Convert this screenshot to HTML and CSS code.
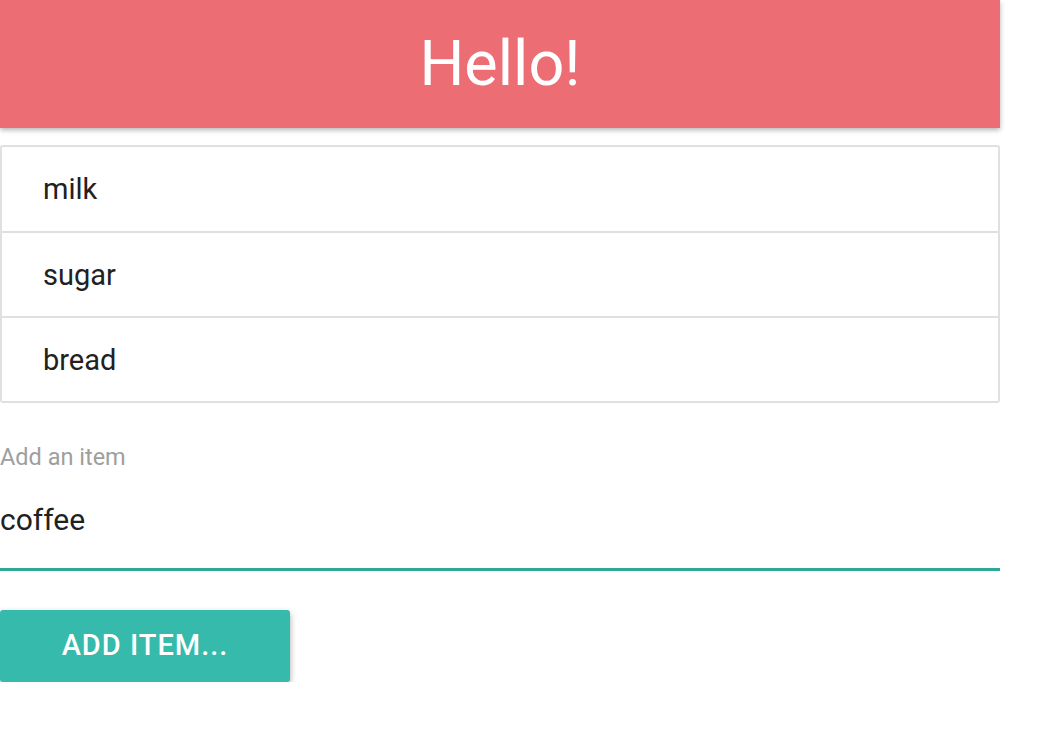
FILE: index.html
```html
<!DOCTYPE html>
<html>
<head>
<meta charset="utf-8">
<link rel="stylesheet" href="styles.css">
</head>
<body>
<div class="app">
  <header class="header"><h1 class="title">Hello!</h1></header>
  <ul class="list">
    <li class="item">milk</li>
    <li class="item">sugar</li>
    <li class="item">bread</li>
  </ul>
  <div class="field">
    <label class="label">Add an item</label>
    <div class="input">coffee</div>
  </div>
  <button class="btn">ADD ITEM...</button>
</div>
</body>
</html>
```
FILE: styles.css
```css
html, body { margin: 0; padding: 0; background: #fff; }
body { font-family: Roboto, "Noto Sans", sans-serif; color: #212121; }
.app { width: 1000px; display: flex; flex-direction: column; align-items: flex-start; }
.header {
  width: 100%; height: 128px; background: #ec6e74;
  box-shadow: 0 2px 5px rgba(0,0,0,0.3);
  display: flex; align-items: center; justify-content: center;
}
.title { margin: 0; font-weight: 400; font-size: 63px; color: #fff; line-height: 1; padding-bottom: 2px; }
.list {
  list-style: none; margin: 17px 0 0; padding: 0; width: 100%;
  border: 2px solid #e0e0e0; border-radius: 3px; box-sizing: border-box;
}
.item {
  height: 85px; padding-left: 41px; display: flex; align-items: center;
  font-size: 29px; border-top: 2px solid #e0e0e0; box-sizing: border-box;
}
.item:first-child { border-top: none; height: 84px; }
.field { width: 100%; margin-top: 40px; }
.label { display: block; font-size: 23.5px; color: #9e9e9e; line-height: 28px; }
.input {
  font-size: 30px; line-height: 36px; padding-top: 31px; padding-bottom: 30px;
  border-bottom: 3px solid #2ea898; color: #212121;
}
.btn {
  margin-top: 39px; width: 290px; height: 72px; border: none; border-radius: 3px;
  background: #35baac; color: #fff; font-family: Roboto, sans-serif; font-size: 29px; font-weight: 500;
  letter-spacing: 1px; box-shadow: 0 3px 6px rgba(0,0,0,0.35); padding: 0 0 2px;
}
```
